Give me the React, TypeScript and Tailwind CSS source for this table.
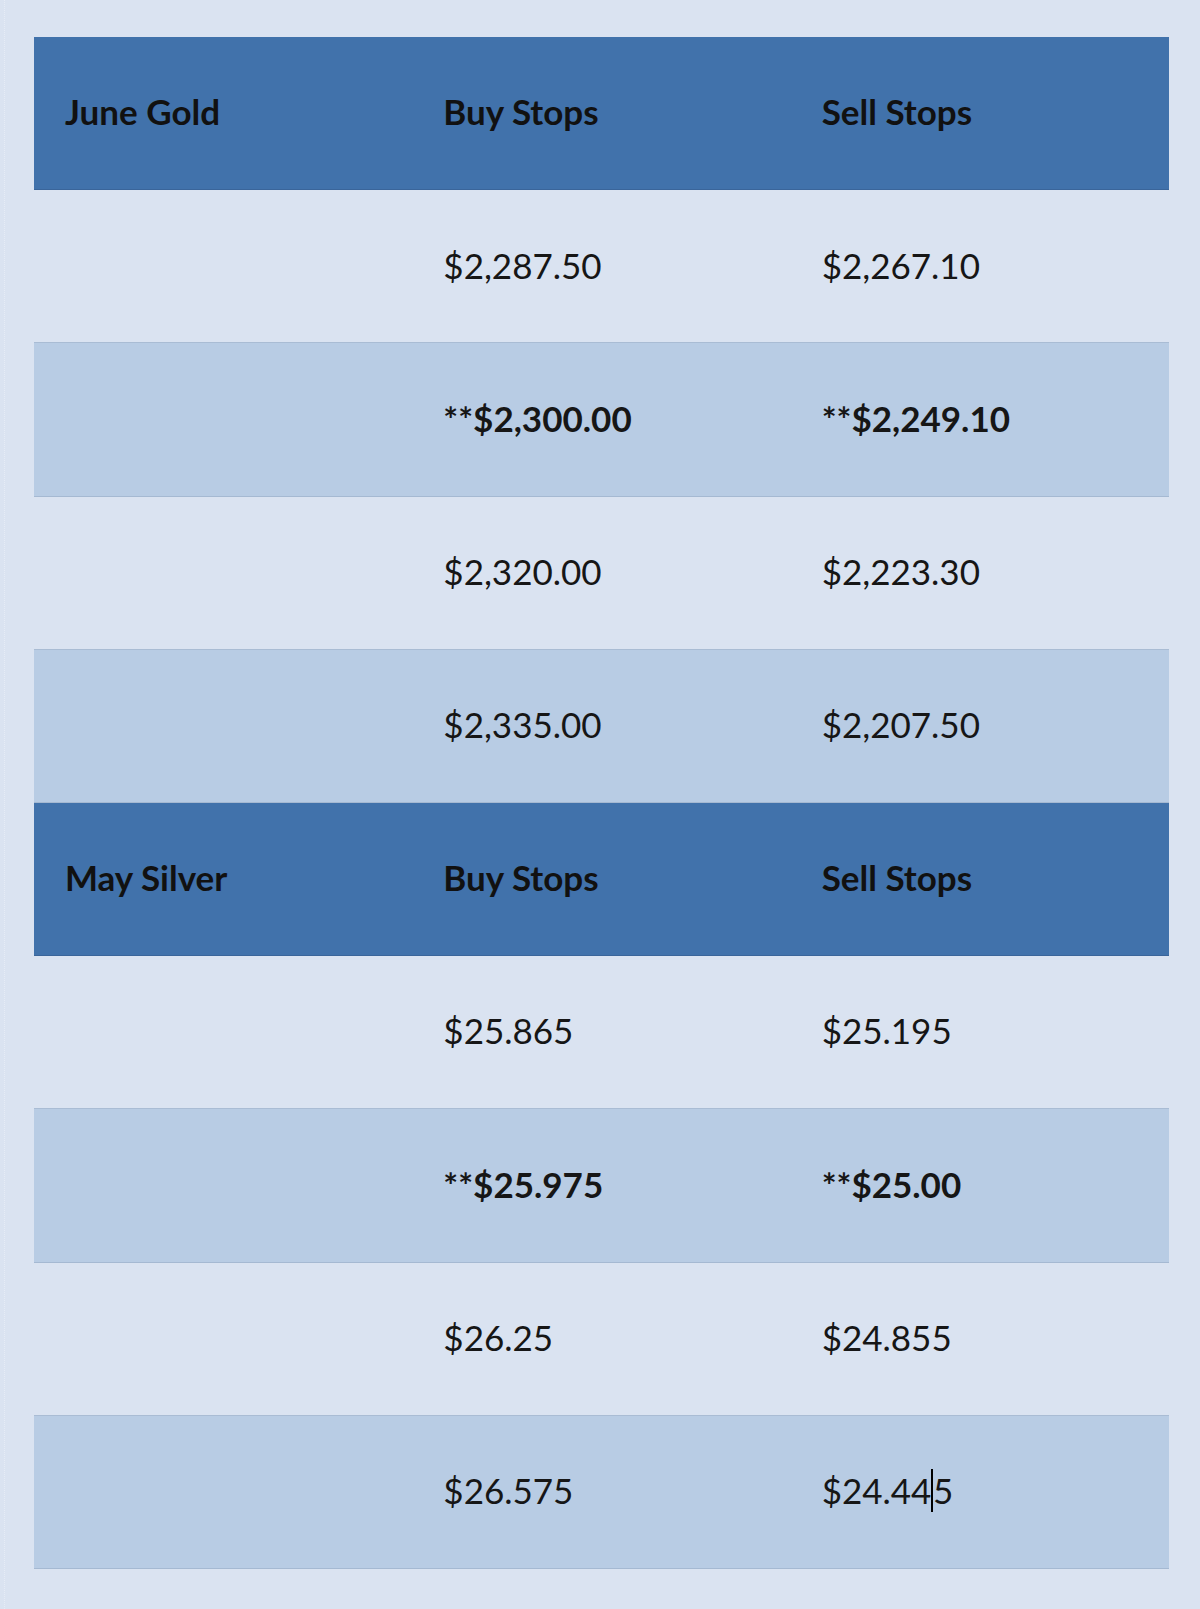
type Row = { label?: string; buy: string; sell: string; kind: "head" | "light" | "mid"; bold?: boolean; caret?: boolean }

const rows: Row[] = [
  { label: "June Gold", buy: "Buy Stops", sell: "Sell Stops", kind: "head" },
  { buy: "$2,287.50", sell: "$2,267.10", kind: "light" },
  { buy: "**$2,300.00", sell: "**$2,249.10", kind: "mid", bold: true },
  { buy: "$2,320.00", sell: "$2,223.30", kind: "light" },
  { buy: "$2,335.00", sell: "$2,207.50", kind: "mid" },
  { label: "May Silver", buy: "Buy Stops", sell: "Sell Stops", kind: "head" },
  { buy: "$25.865", sell: "$25.195", kind: "light" },
  { buy: "**$25.975", sell: "**$25.00", kind: "mid", bold: true },
  { buy: "$26.25", sell: "$24.855", kind: "light" },
  { buy: "$26.575", sell: "$24.445", kind: "mid", caret: true },
]

function Cell({ text, bold, caret }: { text?: string; bold?: boolean; caret?: boolean }) {
  if (caret && text) {
    return (
      <div className={`flex items-center pl-[31px] pb-[3px] ${bold ? "font-bold" : ""}`}>
        <span>{text.slice(0, -1)}</span>
        <span className="inline-block w-[1.5px] h-[43px] bg-black"></span>
        <span>{text.slice(-1)}</span>
      </div>
    )
  }
  return <div className={`flex items-center pl-[31px] pb-[3px] ${bold ? "font-bold" : ""}`}>{text}</div>
}

export default function App() {
  return (
    <div className="min-h-[1609px] w-[1200px] bg-[#dae3f1] pt-[37px] pl-[34px] relative font-['Lato','Open_Sans',sans-serif] text-[35px] text-[#161616]">
      <div className="absolute left-[4px] top-0 h-full border-l border-dotted border-[#e6ecf6]"></div>
      <div className="w-[1135px] flex flex-col">
        {rows.map((r, i) => {
          const bg =
            r.kind === "head"
              ? "bg-[#4172ab] border-[#3a659a] font-bold text-[#111]"
              : r.kind === "mid"
                ? "bg-[#b8cce4] border-[#a5b9d2]"
                : "bg-[#dae3f1] border-[#a9bcd4]"
          return (
            <div key={i} className={`grid grid-cols-3 h-[153.2px] border-b ${bg}`}>
              <Cell text={r.label} bold={r.bold} />
              <Cell text={r.buy} bold={r.bold} />
              <Cell text={r.sell} bold={r.bold} caret={r.caret} />
            </div>
          )
        })}
      </div>
    </div>
  )
}
